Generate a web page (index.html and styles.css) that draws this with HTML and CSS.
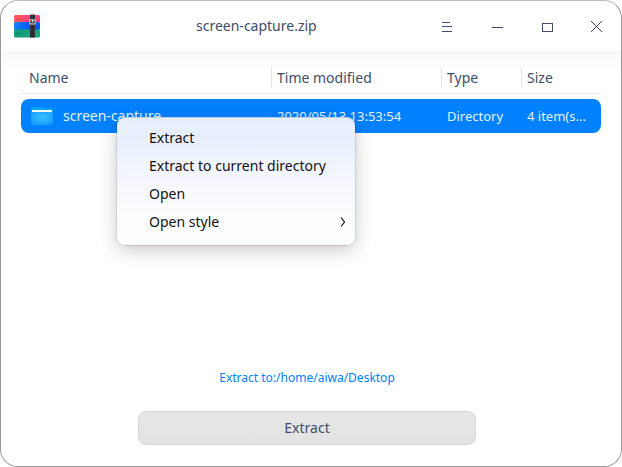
FILE: index.html
```html
<!DOCTYPE html>
<html lang="en">
<head>
<meta charset="utf-8">
<title>screen-capture.zip</title>
<link rel="stylesheet" href="styles.css">
</head>
<body>
<div class="window">
  <header class="titlebar">
    <svg class="app-icon" width="28" height="24" viewBox="0 0 28 24">
      <defs>
        <linearGradient id="red" x1="0" x2="1"><stop offset="0" stop-color="#ff6052"/><stop offset=".6" stop-color="#ff3f7c"/></linearGradient>
        <linearGradient id="blue" x1="0" x2="1"><stop offset="0" stop-color="#1685ff"/><stop offset=".6" stop-color="#0757f0"/></linearGradient>
        <linearGradient id="green" x1="0" x2="1"><stop offset="0" stop-color="#139b78"/><stop offset="1" stop-color="#16a880"/></linearGradient>
      </defs>
      <rect x="1" y="1" width="26" height="8" rx="1.500" fill="url(#red)"/>
      <rect x="1" y="8" width="26" height="8" rx="1.500" fill="url(#blue)"/>
      <rect x="1" y="15.500" width="26" height="8" rx="1.500" fill="url(#green)"/>
      <path d="M3.500 4h3v2h-3zM7.500 5h3v1h-3zM3.500 11.500h3v2h-3zM7.500 12.500h3v1h-3zM3.500 18.500h3v2h-3zM7.500 19.500h3v1h-3z" fill="#102040" fill-opacity=".16"/>
      <rect x="17" y=".5" width="5" height="23" fill="#2f3236"/>
      <path d="M19.500 12v11" stroke="#1b1d1f" stroke-dasharray="1 1"/>
      <rect x="16.800" y="5.800" width="5.400" height="4.200" fill="#45484b" stroke="#c9cbcc" stroke-width="1"/>
      <path d="M19.500 6v2.200" stroke="#eee" stroke-width="1"/>
    </svg>
    <h1 class="title">screen-capture.zip</h1>
    <div class="controls">
      <svg width="50" height="50" viewBox="0 0 50 50"><path d="M21 21.500h8M21 25.500h10M21 30.500h10"/></svg>
      <svg width="50" height="50" viewBox="0 0 50 50"><path d="M21 26.500h11"/></svg>
      <svg width="50" height="50" viewBox="0 0 50 50"><path d="M21.500 22.500h10v8h-10z"/></svg>
      <svg width="50" height="50" viewBox="0 0 50 50"><path class="cross" d="M20 20l11 11M31 20l-11 11"/></svg>
    </div>
  </header>
  <main class="content">
    <div class="table">
      <div class="columns head">
        <span>Name</span><span>Time modified</span><span>Type</span><span>Size</span>
      </div>
      <div class="columns row">
        <span class="file">
          <svg width="22" height="20" viewBox="0 0 22 20">
            <defs>
              <radialGradient id="folder" cx=".5" cy=".4" r=".65"><stop offset="0" stop-color="#35c2ff"/><stop offset="1" stop-color="#169aff"/></radialGradient>
            </defs>
            <path d="M0 6V3Q0 1 2 1h9q1 0 1.500 1H20q2 0 2 2v2z" fill="#00a5f8"/>
            <path d="M1 4h20v3H1z" fill="#fff"/>
            <path d="M0 6h22v10q0 3-3 3H3q-3 0-3-3z" fill="url(#folder)"/>
          </svg>
          screen-capture
        </span>
        <span>2020/05/13 13:53:54</span><span>Directory</span><span>4 item(s...</span>
      </div>
    </div>
    <footer class="actions">
      <a class="path">Extract to:/home/aiwa/Desktop</a>
      <button class="extract" type="button">Extract</button>
    </footer>
  </main>
  <div class="menu" role="menu">
    <div class="item">Extract</div>
    <div class="item">Extract to current directory</div>
    <div class="item">Open</div>
    <div class="item">Open style
      <svg width="6" height="10" viewBox="0 0 6 10"><path d="M1 .5l3.500 4.500L1 9.500" fill="none" stroke="#111" stroke-width="1.200"/></svg>
    </div>
  </div>
</div>
</body>
</html>
```
FILE: styles.css
```css
* { box-sizing: border-box; }
body {
  margin: 0;
  background: #fff;
  font: 14px/20px "Noto Sans", sans-serif;
  color: #414d68;
}
.window {
  position: relative;
  display: flex;
  flex-direction: column;
  width: 622px;
  height: 467px;
  border: 1px solid #999;
  border-top-color: #bbb;
  border-radius: 18px;
  background: #fff;
  overflow: hidden;
}
.titlebar {
  display: grid;
  grid-template-columns: 195px 1fr 200px;
  height: 50px;
  flex: none;
  align-items: center;
}
.app-icon { margin-left: 12px; }
.title {
  margin: 0;
  font-size: 14px;
  font-weight: 400;
}
.controls { display: flex; height: 50px; }
.controls svg {
  flex: none;
  fill: none;
  stroke: #414d68;
  stroke-width: 1;
  shape-rendering: crispEdges;
}
.controls .cross { shape-rendering: auto; }
.content {
  display: flex;
  flex: 1;
  flex-direction: column;
  justify-content: space-between;
  padding: 15px 20px 21px;
  background: linear-gradient(#f7f7f7, #fff 20px);
}
.columns {
  display: grid;
  grid-template-columns: 250px 170px 80px 80px;
}
.head {
  height: 28px;
  border-bottom: 1px solid #e9e9e9;
}
.head span {
  height: 22px;
  padding-left: 5px;
  border-left: 1px solid #e6e6e6;
  line-height: 23px;
}
.head span:first-child { padding-left: 8px; border-left: 0; }
.row {
  height: 34px;
  margin-top: 5px;
  border-radius: 8px;
  background: #0081ff;
  color: #e6f2ff;
  font-size: 13px;
  line-height: 34px;
}
.row span { padding-left: 6px; white-space: nowrap; }
.row .file {
  display: flex;
  align-items: center;
  gap: 10px;
  padding-left: 10px;
  font-size: 14px;
}
.actions {
  display: flex;
  flex-direction: column;
  align-items: center;
}
.path {
  margin-right: 8px;
  color: #0082fa;
  font-size: 12px;
  line-height: 20px;
}
.extract {
  width: 338px;
  height: 34px;
  margin: 23px 8px 0 0;
  padding: 0 0 1px;
  border: 1px solid #d6d6d6;
  border-radius: 8px;
  background: linear-gradient(#e6e6e6, #e3e3e3);
  color: #414d68;
  font: inherit;
}
.menu {
  position: absolute;
  left: 116px;
  top: 117px;
  width: 238px;
  height: 127px;
  padding: 6px 9px 9px 32px;
  border-radius: 8px;
  background: linear-gradient(#e6eefc, #ebf1fd 25%, #f7f9fe 55%, #fcfdfd 80%);
  box-shadow: 0 0 0 1px rgba(0, 0, 0, .1), 0 -1px 0 #d3e5fb, 0 5px 18px rgba(0, 0, 0, .22);
  color: #111;
}
.item {
  display: flex;
  align-items: center;
  justify-content: space-between;
  height: 28px;
}
```
